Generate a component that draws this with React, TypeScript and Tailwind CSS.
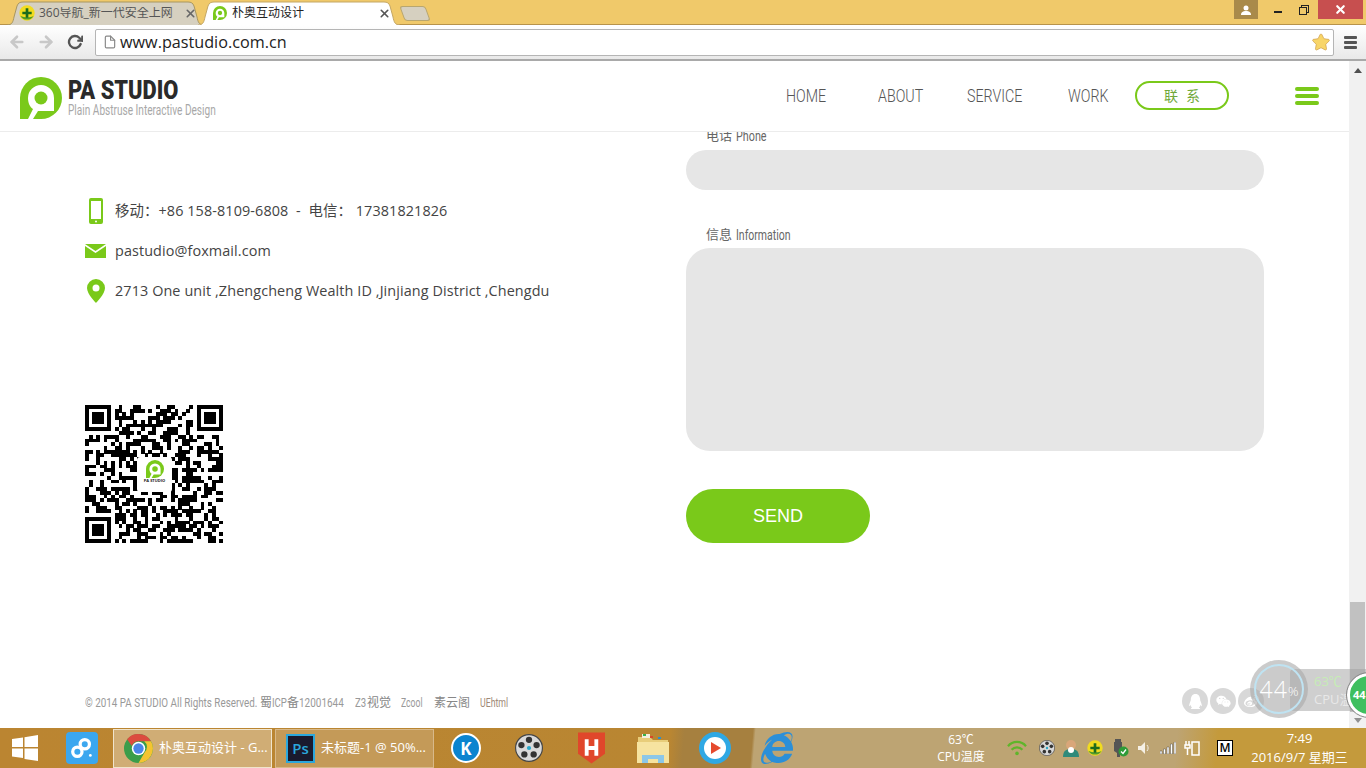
import { FaQq, FaWeixin, FaWeibo, FaInternetExplorer, FaStar } from "react-icons/fa";
import { FiArrowLeft, FiArrowRight, FiRotateCw, FiFile, FiX } from "react-icons/fi";

const narrow = "font-['Roboto','Noto_Sans_CJK_SC',sans-serif]";

const Logo = ({ size }: { size: number }) => (
  <svg viewBox="0 0 42 42" width={size} height={size}>
    <path d="M21 0a21 21 0 0 1 0 42H0V21A21 21 0 0 1 21 0z" fill="#7ac91a" />
    <path d="M21 8A13 13 0 0 0 8 21C8 26 10 30 13 32L8 42H13L18 34H34V21A13 13 0 0 0 21 8z" fill="#fff" />
    <circle cx="21" cy="21" r="6.500" fill="#7ac91a" />
  </svg>
);

const QrCode = () => {
  const n = 37;
  const cells: React.ReactNode[] = [];
  const inFinder = (x: number, y: number) =>
    (x < 8 && y < 8) || (x > n - 9 && y < 8) || (x < 8 && y > n - 9);
  let seed = 20160907;
  for (let y = 0; y < n; y++) {
    for (let x = 0; x < n; x++) {
      seed = (seed * 1103515245 + 12345) & 0x7fffffff;
      if (!inFinder(x, y) && (seed >> 16) % 100 < 50) {
        cells.push(<rect key={`${x}-${y}`} x={x} y={y} width={1.02} height={1.02} />);
      }
    }
  }
  const finder = (x: number, y: number) => (
    <g key={`f${x}${y}`}>
      <rect x={x} y={y} width={7} height={7} />
      <rect x={x + 1} y={y + 1} width={5} height={5} fill="#fff" />
      <rect x={x + 2} y={y + 2} width={3} height={3} />
    </g>
  );
  return (
    <div className="relative w-[138px] h-[138px]">
      <svg viewBox="0 0 37 37" width="138" height="138" shapeRendering="crispEdges">
        {cells}
        {finder(0, 0)}
        {finder(30, 0)}
        {finder(0, 30)}
      </svg>
      <div className="absolute left-[52px] top-[52px] w-[35px] h-[35px] bg-white rounded-[3px] flex flex-col items-center pt-[3px]">
        <Logo size={18} />
        <span className="text-[4px] leading-[6px] font-bold text-[#222]">PA STUDIO</span>
      </div>
    </div>
  );
};

const Tab = ({ active, width, className, children }: { active?: boolean; width: number; className: string; children: React.ReactNode }) => (
  <div className={`relative h-[24px] -mb-px flex items-center ${className}`} style={{ width }}>
    <svg className="absolute inset-0" width={width} height="24" viewBox={`0 0 ${width} 24`}>
      <path
        d={`M0 24 C5 24 6 21 7 16 L10 5 C11 2 13 1 16 1 L${width - 16} 1 C${width - 13} 1 ${width - 11} 2 ${width - 10} 5 L${width - 7} 16 C${width - 6} 21 ${width - 5} 24 ${width} 24`}
        fill={active ? "#ffffff" : "#d6d0c0"}
        stroke={active ? "#c4a765" : "#a8965f"}
      />
    </svg>
    <div className="relative flex items-center w-full">{children}</div>
  </div>
);

const TrayMovie = ({ size }: { size: number }) => (
  <svg viewBox="0 0 24 24" width={size} height={size}>
    <circle cx="12" cy="12" r="11.500" fill="#d9d9d9" stroke="#444" strokeWidth="1" />
    {[[12, 5], [18.5, 9.5], [16, 17.5], [8, 17.5], [5.5, 9.5]].map(([x, y]) => (
      <circle key={`${x}${y}`} cx={x} cy={y} r="2.700" fill="#333" />
    ))}
    <circle cx="12" cy="12" r="1.800" fill="#2aa7c9" />
  </svg>
);

const Plus360 = ({ size }: { size: number }) => (
  <svg viewBox="0 0 24 24" width={size} height={size}>
    <circle cx="12" cy="12" r="11.500" fill="#f1dc1f" />
    <path d="M2 16a11.500 11.500 0 0 0 20 0c-4 3-14 3-20 0z" fill="#4f9a2a" />
    <path d="M10 5h4v5h5v4h-5v5h-4v-5H5v-4h5z" fill="#1c6b1c" />
  </svg>
);

const ChromeIcon = () => (
  <svg viewBox="0 0 28 28" width="29" height="29">
    <circle cx="14" cy="14" r="14" fill="#3a9d4a" />
    <path d="M14 0a14 14 0 0 1 12.100 7H14a7 7 0 0 0-6.500 4.500L3 5a14 14 0 0 1 11-5z" fill="#dc4c3f" />
    <path d="M26.100 7A14 14 0 0 1 14 28l6-10.500A7 7 0 0 0 19.500 7z" fill="#f4c430" />
    <circle cx="14" cy="14" r="6.500" fill="#fff" />
    <circle cx="14" cy="14" r="5" fill="#4a86e8" />
  </svg>
);

const TaskButton = ({ icon, label, active }: { icon: React.ReactNode; label: string; active?: boolean }) => (
  <div
    className={`w-[159px] h-[39px] flex items-center pl-[10px] gap-[6px] border ${active ? "border-[#f0e4cc] bg-[#d0ad75]" : "border-[#d8b98a] bg-[#c49a58] ml-[3px]"}`}
  >
    {icon}
    <span className="text-[13px] text-white whitespace-nowrap">{label}</span>
  </div>
);

const Slot = ({ w, children }: { w: number; children: React.ReactNode }) => (
  <div className="flex items-center justify-center shrink-0 h-full" style={{ width: w }}>
    {children}
  </div>
);

const Taskbar = () => (
  <div className="h-[40px] flex items-center shrink-0 bg-[linear-gradient(95deg,#bb8531_0,#b98632_49%,#a6803f_50%,#a6803f_55%,#bda473_55.2%,#bda473_86%,#c49a3c_89%,#c49a3c_100%)]">
    <Slot w={50}>
      <svg viewBox="0 0 26 26" width="26" height="26">
        <path d="M0 4l11-1.600V12H0zM12.500 2.200L26 0v12H12.500zM0 13.500h11v9.600L0 21.500zM12.500 13.500H26V26l-13.500-2z" fill="#fff" />
      </svg>
    </Slot>
    <Slot w={63}>
      <div className="w-[32px] h-[32px] rounded-[4px] bg-[#3ba7ef] flex items-center justify-center">
        <svg viewBox="0 0 28 28" width="26" height="26" fill="none" stroke="#fff" strokeWidth="3.500">
          <circle cx="9" cy="18" r="5" />
          <circle cx="17" cy="10" r="5" />
          <circle cx="23" cy="22" r="1.500" fill="#fff" stroke="none" />
        </svg>
      </div>
    </Slot>
    <TaskButton active icon={<ChromeIcon />} label="朴奥互动设计 - G..." />
    <TaskButton
      icon={
        <div className="w-[29px] h-[29px] bg-[#1a1a2e] border-2 border-[#2ba7dc] flex items-center justify-center text-[#2ba7dc] text-[15px] leading-none font-semibold">
          Ps
        </div>
      }
      label="未标题-1 @ 50%..."
    />
    <Slot w={64}>
      <div className="w-[30px] h-[30px] rounded-full bg-[#0b84cf] border-2 border-white flex items-center justify-center text-white font-bold text-[17px] leading-none">
        K
      </div>
    </Slot>
    <Slot w={62}>
      <TrayMovie size={28} />
    </Slot>
    <Slot w={62}>
      <svg viewBox="0 0 28 32" width="27" height="32">
        <path d="M0 0h28v22l-14 10L0 22z" fill="#e0472b" />
        <path d="M7 7h4v7h6V7h4v17h-4v-6h-6v6H7z" fill="#fff" />
      </svg>
    </Slot>
    <Slot w={62}>
      <svg viewBox="0 0 32 30" width="32" height="30">
        <path d="M1 4h12l3 3h15v21H1z" fill="#e8cd7a" />
        <path d="M5 1h8v4H5z" fill="#f4f0dd" />
        <rect x="6" y="1" width="3" height="2" fill="#38b24a" />
        <rect x="13" y="3" width="3" height="2" fill="#d9482b" />
        <rect x="21" y="4" width="3" height="2" fill="#2a8fd0" />
        <path d="M0 9h32v21H0z" fill="#f6e3a0" />
        <path d="M5 22h22v8h-6v-4h-10v4H5z" fill="#8cc7e8" />
      </svg>
    </Slot>
    <Slot w={62}>
      <div className="w-[32px] h-[32px] rounded-full bg-[#2fa8e4] flex items-center justify-center">
        <div className="w-[22px] h-[22px] rounded-full bg-white flex items-center justify-center">
          <svg viewBox="0 0 12 12" width="12" height="12">
            <path d="M2 0l10 6-10 6z" fill="#e64a2e" />
          </svg>
        </div>
      </div>
    </Slot>
    <Slot w={62}>
      <FaInternetExplorer size={32} color="#2b8fd8" />
    </Slot>
    <div className="w-[113px] shrink-0" />
    <div className="w-[80px] shrink-0 flex flex-col items-center text-[12px] leading-[17px] text-white">
      <span>63℃</span>
      <span>CPU温度</span>
    </div>
    <div className="w-[2px] shrink-0" />
    <Slot w={28}>
      <svg viewBox="0 0 22 20" width="20" height="18" fill="none" stroke="#5fb52a" strokeWidth="2.500">
        <path d="M1 8a13 13 0 0 1 20 0M5 12a8 8 0 0 1 12 0" />
        <circle cx="11" cy="16" r="2" fill="#5fb52a" stroke="none" />
      </svg>
    </Slot>
    <div className="w-[3px] shrink-0" />
    <Slot w={26}>
      <TrayMovie size={16} />
    </Slot>
    <Slot w={22}>
      <svg viewBox="0 0 16 18" width="16" height="18">
        <circle cx="8" cy="6" r="5" fill="#d9a679" />
        <path d="M0 18c0-6 3-8 8-8s8 2 8 8z" fill="#2f8a7a" />
        <circle cx="8" cy="11" r="3" fill="#fff" />
      </svg>
    </Slot>
    <Slot w={26}>
      <Plus360 size={16} />
    </Slot>
    <Slot w={24}>
      <svg viewBox="0 0 18 18" width="18" height="18">
        <path d="M4 0h6v3h1v9l-2 2v4H6v-4l-3-2V3h1z" fill="#555" />
        <circle cx="12.500" cy="12.500" r="5" fill="#2e9b37" />
        <path d="M10 12.500l2 2 3-4" stroke="#fff" strokeWidth="1.300" fill="none" />
      </svg>
    </Slot>
    <Slot w={23}>
      <svg viewBox="0 0 14 14" width="14" height="14" fill="#f5f0e5">
        <path d="M1 5h3l4-4v12L4 9H1z" />
        <path d="M10 4c1.500 2 1.500 4 0 6" stroke="#f5f0e5" fill="none" />
      </svg>
    </Slot>
    <Slot w={25}>
      <svg viewBox="0 0 16 12" width="16" height="12">
        <path d="M0 9h2v3H0zM3.500 7h2v5h-2zM7 5h2v7H7zM10.500 2h2v10h-2zM14 0h2v12h-2z" fill="#fff" stroke="#333" strokeWidth="0.400" />
      </svg>
    </Slot>
    <Slot w={23}>
      <svg viewBox="0 0 16 16" width="16" height="16" fill="none" stroke="#fff" strokeWidth="1.500">
        <rect x="8" y="2" width="7" height="13" />
        <path d="M2 1v4M5 1v4M1 5h5v3H1zM3.500 8v7" />
      </svg>
    </Slot>
    <div className="w-[14px] shrink-0" />
    <Slot w={16}>
      <div className="w-[16px] h-[16px] bg-white border border-black text-[12px] leading-none font-semibold text-black flex items-center justify-center">
        M
      </div>
    </Slot>
    <div className="flex-1 flex flex-col items-center text-[13px] leading-[19px] text-white whitespace-nowrap">
      <span>7:49</span>
      <span>2016/9/7 星期三</span>
    </div>
  </div>
);

const ContactRow = ({ icon, children }: { icon: React.ReactNode; children: React.ReactNode }) => (
  <div className="h-10 flex items-center">
    <div className="w-[21px] flex justify-center">{icon}</div>
    <span className="ml-[9px] -mt-[1px] text-[14.400px] tracking-[0.100px] text-[#444] whitespace-nowrap">{children}</span>
  </div>
);

const NavLink = ({ w, children }: { w: number; children: React.ReactNode }) => (
  <div style={{ width: w }}>
    <a className={`mt-[1px] inline-block origin-left scale-x-[.75] font-light text-[#555] text-[19px] ${narrow}`}>{children}</a>
  </div>
);

export default function App() {
  return (
    <div className="relative w-[1366px] h-[768px] overflow-hidden flex flex-col bg-white font-['Open_Sans','Noto_Sans_CJK_SC',sans-serif]">
      {/* tab strip */}
      <div className="h-[25px] shrink-0 bg-[#f0c96a] border-b border-[#b8934a] flex items-end pl-[7px]">
        <Tab width={197} className="">
          <span className="ml-[12px] flex">
            <Plus360 size={16} />
          </span>
          <span className="relative ml-[4px] w-[142px] overflow-hidden whitespace-nowrap text-[12px] leading-none text-[#555]">
            360导航_新一代安全上网
            <span className="absolute right-0 top-0 bottom-0 w-[12px] bg-[linear-gradient(90deg,transparent,#d6d0c0)]" />
          </span>
          <FiX className="ml-[3px] text-[#666]" size={13} strokeWidth={3} />
        </Tab>
        <Tab active width={202} className="-ml-[6px]">
          <span className="ml-[15px] flex">
            <Logo size={14} />
          </span>
          <span className="ml-[5px] w-[145px] whitespace-nowrap text-[12px] leading-none text-[#222]">
            朴奥互动设计
          </span>
          <FiX className="ml-[1px] text-[#555]" size={13} strokeWidth={3} />
        </Tab>
        <div className="h-[15px] w-[26px] ml-[2px] mb-[3px] rounded-[3px] bg-[#d6d0c0] border border-[#b8a66f] skew-x-[20deg]" />
        <div className="flex-1" />
      </div>
      {/* window buttons */}
      <div className="absolute right-[3px] top-0 flex items-start text-white">
        <div className="w-[24px] h-[19px] bg-[#a98a4a] flex items-center justify-center">
          <svg viewBox="0 0 10 10" width="10" height="10" fill="#fff">
            <circle cx="5" cy="3" r="2.500" />
            <path d="M0 10c0-3 2-4 5-4s5 1 5 4z" />
          </svg>
        </div>
        <div className="w-[36px] h-[19px] relative">
          <div className="absolute left-[16px] top-[11px] w-[8px] h-[2px] bg-[#222]" />
        </div>
        <div className="w-[24px] h-[19px] relative">
          <div className="absolute left-[7px] top-[5px] w-[8px] h-[8px] border-[1.500px] border-[#222]" />
          <div className="absolute left-[5px] top-[7px] w-[8px] h-[8px] border-[1.500px] border-[#222] bg-[#f0c96a]" />
        </div>
        <div className="w-[45px] h-[19px] bg-[#c74f4f] flex items-center justify-center">
          <FiX size={13} strokeWidth={4} />
        </div>
      </div>
      {/* toolbar */}
      <div className="h-[36px] shrink-0 flex items-center bg-[linear-gradient(#ffffff,#e9e9e9)] border-b-2 border-[#a9a9a9]">
        <div className="w-[95px] flex items-center pl-[8px] gap-[11px]">
          <FiArrowLeft size={18} strokeWidth={3.500} className="text-[#c8c8c8]" />
          <FiArrowRight size={18} strokeWidth={3.500} className="text-[#c8c8c8]" />
          <FiRotateCw size={16} strokeWidth={3.500} className="text-[#555] ml-[1px]" />
        </div>
        <div className="w-[1239px] h-[27px] flex items-center bg-white border border-[#b5b5b5] rounded-[2px] pl-[7px] pr-[3px]">
          <FiFile size={14} className="text-[#888]" />
          <span className="ml-[3px] mt-[1px] text-[16.200px] text-[#222] flex-1">www.pastudio.com.cn</span>
          <FaStar size={18} className="text-[#f8d568] stroke-[#c9953f] stroke-[20]" />
        </div>
        <div className="flex-1 flex flex-col items-center gap-[2px]">
          <div className="w-[13px] h-[3px] rounded-[1px] bg-[#555]" />
          <div className="w-[13px] h-[3px] rounded-[1px] bg-[#555]" />
          <div className="w-[13px] h-[3px] rounded-[1px] bg-[#555]" />
        </div>
      </div>

      <div className="flex-1 flex min-h-0">
        <div className="flex-1 flex flex-col min-w-0">
          {/* site header */}
          <header className="relative z-10 h-[71px] shrink-0 flex items-center bg-white border-b border-[#ececec] pl-[20px]">
            <div className="mt-[3px]">
              <Logo size={42} />
            </div>
            <div className="ml-[6px] mt-[2px] w-[148px] flex flex-col whitespace-nowrap">
              <span className={`inline-block origin-left scale-x-[.84] text-[26px] leading-[26px] font-black text-[#2a2a2a] ${narrow}`}>PA STUDIO</span>
              <span className={`inline-block origin-left scale-x-[.72] text-[14px] leading-[15px] text-[#a8a8a8] ${narrow}`}>Plain Abstruse Interactive Design</span>
            </div>
            <nav className="ml-[570px] -mt-[1px] flex items-center">
              <NavLink w={92}>HOME</NavLink>
              <NavLink w={89}>ABOUT</NavLink>
              <NavLink w={101}>SERVICE</NavLink>
              <NavLink w={67}>WORK</NavLink>
              <div className="w-[94px] h-[29px] rounded-full border-2 border-[#7ac91a] pl-[8px] text-[#6fa83a] text-[14px] tracking-[8px] flex items-center justify-center">
                联系
              </div>
              <div className="ml-[66px] flex flex-col gap-[3px]">
                <div className="w-[24px] h-[4px] rounded-full bg-[#7ac91a]" />
                <div className="w-[24px] h-[4px] rounded-full bg-[#7ac91a]" />
                <div className="w-[24px] h-[4px] rounded-full bg-[#7ac91a]" />
              </div>
            </nav>
          </header>

          <main className="flex-1 flex flex-col justify-between min-h-0">
            <div className="flex">
              <div className="w-[686px] pl-[85px] pt-[59px] shrink-0">
                <ContactRow
                  icon={
                    <svg viewBox="0 0 14 26" width="14" height="26">
                      <path fillRule="evenodd" d="M2 0h10a2 2 0 0 1 2 2v22a2 2 0 0 1-2 2H2a2 2 0 0 1-2-2V2a2 2 0 0 1 2-2zM2 3v18h10V3z" fill="#7ac91a" />
                      <circle cx="7" cy="23.500" r="1" fill="#fff" />
                    </svg>
                  }
                >
                  移动：+86 158-8109-6808&nbsp; -&nbsp; 电信： 17381821826
                </ContactRow>
                <ContactRow
                  icon={
                    <svg viewBox="0 0 21 14" width="21" height="14" fill="#7ac91a">
                      <path d="M0 0h21L10.500 7z" />
                      <path d="M0 2l10.500 7L21 2v12H0z" />
                    </svg>
                  }
                >
                  pastudio@foxmail.com
                </ContactRow>
                <ContactRow
                  icon={
                    <svg viewBox="0 0 18 24" width="18" height="24">
                      <path fillRule="evenodd" d="M9 0a9 9 0 0 1 9 9c0 6-9 15-9 15S0 15 0 9a9 9 0 0 1 9-9zm0 5.500a3.500 3.500 0 1 0 0 7 3.500 3.500 0 0 0 0-7z" fill="#7ac91a" />
                    </svg>
                  }
                >
                  2713 One unit ,Zhengcheng Wealth ID ,Jinjiang District ,Chengdu
                </ContactRow>
                <div className="mt-[94px]">
                  <QrCode />
                </div>
              </div>
              <div className="w-[578px] shrink-0 -mt-[3px]">
                <label className={`flex h-[14px] pl-[20px] text-[13px] leading-[14px] text-[#666] ${narrow}`}>
                  <span>电话</span>
                  <span className="ml-[4px] text-[14px] inline-block origin-left scale-x-[.77]">Phone</span>
                </label>
                <div className="mt-[7px] h-[40px] rounded-full bg-[#e6e6e6]" />
                <label className={`flex mt-[38px] h-[14px] pl-[20px] text-[13px] leading-[14px] text-[#666] ${narrow}`}>
                  <span>信息</span>
                  <span className="ml-[4px] text-[14px] inline-block origin-left scale-x-[.75]">Information</span>
                </label>
                <div className="mt-[6px] h-[203px] rounded-[24px] bg-[#e6e6e6]" />
                <button className="mt-[38px] w-[184px] h-[54px] rounded-full bg-[#7ac91a] text-white text-[18px] font-['Liberation_Sans',sans-serif]">
                  SEND
                </button>
              </div>
            </div>
            <footer className={`flex pl-[85px] pb-[18px] text-[12px] leading-[14px] text-[#999] whitespace-nowrap ${narrow}`}>
              <span className="w-[175px] inline-block origin-left scale-x-[.82]">© 2014 PA STUDIO All Rights Reserved.</span>
              <span className="text-[#888]">蜀</span>
              <span className="w-[15px] inline-block origin-left scale-x-[.8]">ICP</span>
              <span className="text-[#888]">备</span>
              <span className="w-[45px] inline-block origin-left scale-x-[.83]">12001644</span>
              <span className="ml-[11px] w-[12px] inline-block origin-left scale-x-[.8]">Z3</span>
              <span className="text-[#888]">视觉</span>
              <span className="ml-[10px] w-[23px] inline-block origin-left scale-x-[.72]">Zcool</span>
              <span className="ml-[10px] text-[#888]">素云阁</span>
              <span className="ml-[10px] inline-block origin-left scale-x-[.73] text-[#a08a78]">UEhtml</span>
            </footer>
          </main>
        </div>
        {/* scrollbar */}
        <div className="w-[17px] shrink-0 bg-[#f1f1f1] flex flex-col items-center">
          <div className="mt-[7px] w-0 h-0 border-x-[4px] border-x-transparent border-b-[5px] border-b-[#505050]" />
          <div className="flex-1" />
          <div className="w-[15px] h-[110px] bg-[#c1c1c1]" />
          <div className="h-[16px] flex items-center">
            <div className="w-0 h-0 border-x-[4px] border-x-transparent border-t-[5px] border-t-[#909090]" />
          </div>
        </div>
      </div>

      <Taskbar />

      {/* share buttons */}
      <div className="absolute left-[1182px] top-[688px] flex gap-[2px]">
        {[FaQq, FaWeixin, FaWeibo].map((Icon, i) => (
          <div key={i} className="w-[26px] h-[26px] rounded-full bg-[#d8d8d8] flex items-center justify-center text-white">
            <Icon size={15} />
          </div>
        ))}
      </div>
      {/* cpu monitor widget */}
      <div className="absolute left-[1290px] top-[669px] w-[76px] h-[42px] bg-[#a0a0a0]/50 rounded-l-[4px] flex flex-col items-start pl-[24px] text-[13px] leading-[18px] overflow-hidden whitespace-nowrap">
        <span className="text-[#c6ecb6] mt-[3px]">63℃</span>
        <span className="text-[#e8e8e8]">CPU温</span>
      </div>
      <div className="absolute left-[1250px] top-[660px] w-[58px] h-[58px] rounded-full bg-[#a8a8a8]/60 flex items-center justify-center">
        <div className="w-[50px] h-[50px] rounded-full border-2 border-[#bfe3f2] flex items-center justify-center text-white text-[23px] leading-none font-light tracking-[1px]">
          44<span className="text-[13px] mt-[5px] tracking-normal">%</span>
        </div>
      </div>
      <div className="absolute left-[1347px] top-[673px] w-[44px] h-[44px] rounded-full bg-[#3fbf5f] border-[3px] border-white outline outline-[#888] flex items-center pl-[3px] text-white text-[11px] font-bold">
        44
      </div>
    </div>
  );
}
